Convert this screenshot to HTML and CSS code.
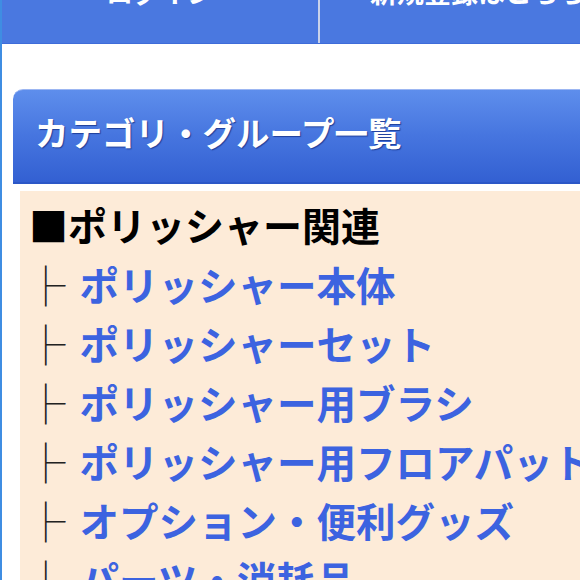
FILE: index.html
```html
<!DOCTYPE html>
<html lang="ja">
<head>
    <meta charset="UTF-8">
    <meta name="viewport" content="width=device-width, initial-scale=1.0">
    <title>カテゴリ・グループ一覧</title>
    <link rel="stylesheet" href="styles.css">
</head>
<body>
    <div id="page">
        <div id="global-nav">
            <a class="nav-item" href="#">ログイン</a>
            <a class="nav-item" href="#">新規登録はこちら</a>
        </div>

        <div class="side-box">
            <h2 class="box-title">カテゴリ・グループ一覧</h2>
            <div class="box-body">
                <div class="group-name">■ポリッシャー関連</div>
                <ul class="group-list">
                    <li><span class="branch">├</span><a href="#">ポリッシャー本体</a></li>
                    <li><span class="branch">├</span><a href="#">ポリッシャーセット</a></li>
                    <li><span class="branch">├</span><a href="#">ポリッシャー用ブラシ</a></li>
                    <li><span class="branch">├</span><a href="#">ポリッシャー用フロアパット</a></li>
                    <li><span class="branch">├</span><a href="#">オプション・便利グッズ</a></li>
                    <li><span class="branch">├</span><a href="#">パーツ・消耗品</a></li>
                </ul>
            </div>
        </div>
    </div>
</body>
</html>
```

FILE: styles.css
```css
body {
    margin: 0;
    padding: 0;
    background: #fff;
    font-family: "Noto Sans CJK JP", "Noto Sans", sans-serif;
    overflow: hidden;
}

#page {
    border-left: 2px solid #3f8de2;
    min-height: 100vh;
}

/* page is scrolled a little, only the bottom of the nav shows */
#global-nav {
    display: flex;
    margin-top: -37px;
    background: #4a78e0;
    border-bottom: 1px solid #3e6cd9;
}

.nav-item {
    flex: 0 0 316px;
    padding: 14px 0 36px;
    line-height: 30px;
    text-align: center;
    color: #fff;
    font-size: 27px;
    font-weight: bold;
    text-decoration: none;
    white-space: nowrap;
    border-right: 2px solid #c9d2ea;
}

.side-box {
    margin: 45px 0 0 11px;
}

.box-title {
    margin: 0;
    height: 92px;
    padding-left: 22px;
    line-height: 84px;
    font-size: 33.5px;
    font-weight: bold;
    color: #fff;
    text-shadow: 1px 1px 1px #1f3f9a;
    background: linear-gradient(to bottom, #5e8eec 0%, #4675df 50%, #3360d2 100%);
    border-top: 1px solid #9cb6f2;
    border-bottom: 2px solid #2b57c7;
    border-radius: 10px 0 0 0;
    white-space: nowrap;
}

.box-body {
    margin: 7px 0 0 7px;
    padding: 4px 0 0 6px;
    background: #fdebd8;
    min-height: 400px;
}

.group-name {
    margin-left: 3px;
    font-size: 39px;
    font-weight: bold;
    line-height: 59px;
    color: #000;
    white-space: nowrap;
}

.group-list {
    list-style: none;
    margin: 0;
    padding: 0;
}

.group-list li {
    font-size: 39.5px;
    line-height: 59px;
    white-space: nowrap;
}

.branch {
    font-weight: 300;
    color: #222;
    margin-right: 14px;
}

.group-list a {
    color: #3c63e0;
    font-weight: bold;
    text-decoration: none;
}
```
